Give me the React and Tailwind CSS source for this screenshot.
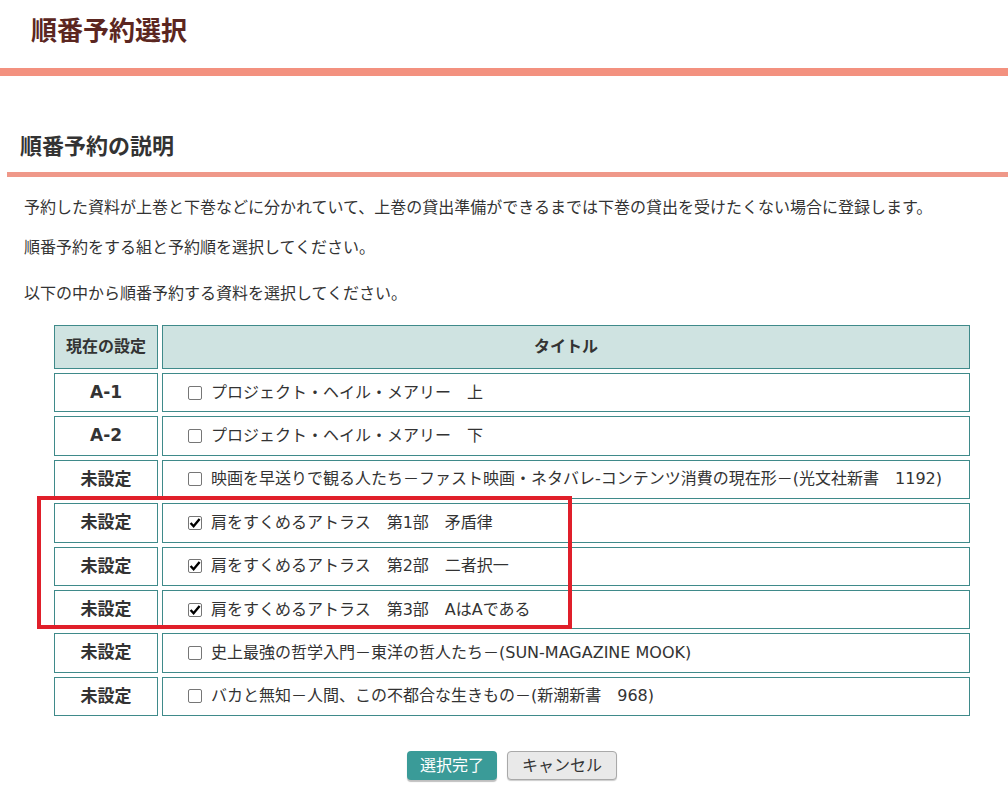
import React from "react";

const rows = [
  { set: "A-1", title: "プロジェクト・ヘイル・メアリー　上", checked: false },
  { set: "A-2", title: "プロジェクト・ヘイル・メアリー　下", checked: false },
  {
    set: "未設定",
    title: "映画を早送りで観る人たち－ファスト映画・ネタバレ-コンテンツ消費の現在形－(光文社新書　1192)",
    checked: false,
  },
  { set: "未設定", title: "肩をすくめるアトラス　第1部　矛盾律", checked: true },
  { set: "未設定", title: "肩をすくめるアトラス　第2部　二者択一", checked: true },
  { set: "未設定", title: "肩をすくめるアトラス　第3部　AはAである", checked: true },
  { set: "未設定", title: "史上最強の哲学入門－東洋の哲人たち－(SUN-MAGAZINE MOOK)", checked: false },
  { set: "未設定", title: "バカと無知－人間、この不都合な生きもの－(新潮新書　968)", checked: false },
];

function Check({ checked }) {
  return (
    <span className="inline-flex w-[14px] h-[14px] shrink-0 items-center justify-center border border-[#767676] bg-white rounded-[2px]">
      {checked && (
        <svg width="12" height="12" viewBox="0 0 12 12">
          <path d="M1.6 6 L4.6 9.2 L10.6 2" fill="none" stroke="#000" strokeWidth="2.4" />
        </svg>
      )}
    </span>
  );
}

export default function App() {
  return (
    <div className="w-full min-h-dvh bg-white text-[#333] font-['DejaVu_Sans','Noto_Sans_CJK_JP',sans-serif]">
      <header>
        <h1 className="pl-[31px] pt-[12px] h-[68px] text-[26px] font-bold text-[#5b2620] leading-[38px]">順番予約選択</h1>
        <div className="h-[8px] bg-[#f3917f]" />
      </header>

      <section className="mt-[55px]">
        <h2 className="pl-[20px] text-[22px] font-bold leading-[32px] text-[#333]">順番予約の説明</h2>
        <div className="ml-[7px] mt-[9px] h-[5px] bg-[#ef9889]" />

        <div className="pl-[24px] text-[16px] leading-[24px]">
          <p className="mt-[19px]">予約した資料が上巻と下巻などに分かれていて、上巻の貸出準備ができるまでは下巻の貸出を受けたくない場合に登録します。</p>
          <p className="mt-[16px]">順番予約をする組と予約順を選択してください。</p>
          <p className="mt-[22px]">以下の中から順番予約する資料を選択してください。</p>
        </div>

        <div className="relative mt-[15px] ml-[50px] w-[924px]">
          <table className="w-full border-separate border-spacing-[4px] text-[16px]">
            <thead>
              <tr>
                <th className="w-[104px] h-[44px] border border-[#3f8a8a] bg-[#cfe3e1] text-[16px] font-bold text-[#333]">現在の設定</th>
                <th className="h-[44px] border border-[#3f8a8a] bg-[#cfe3e1] text-[16px] font-bold text-[#333]">タイトル</th>
              </tr>
            </thead>
            <tbody>
              {rows.map((r, i) => (
                <tr key={i}>
                  <td className="h-[39.4px] border border-[#3f8a8a] text-center text-[17px] font-bold text-[#333]">{r.set}</td>
                  <td className="h-[39.4px] border border-[#3f8a8a] pl-[25px]">
                    <div className="flex items-center gap-[9px] text-[#333]">
                      <Check checked={r.checked} />
                      <span>{r.title}</span>
                    </div>
                  </td>
                </tr>
              ))}
            </tbody>
          </table>
          <div className="absolute left-[-13px] top-[175px] w-[535px] h-[133px] border-[4px] border-[#e01f2a] pointer-events-none" />
        </div>

        <div className="mt-[31px] flex justify-center gap-[10px] pl-[16px]">
          <button className="h-[29px] w-[90px] rounded-[4px] bg-[#3a9b98] text-white text-[16px] shadow-[0_2px_1px_rgba(0,0,0,0.25)]">選択完了</button>
          <button className="h-[29px] w-[110px] rounded-[4px] border border-[#a9a9a9] bg-[#e9e9e9] text-[#333] text-[16px] shadow-[0_1px_1px_rgba(0,0,0,0.2)]">キャンセル</button>
        </div>
      </section>
    </div>
  );
}
